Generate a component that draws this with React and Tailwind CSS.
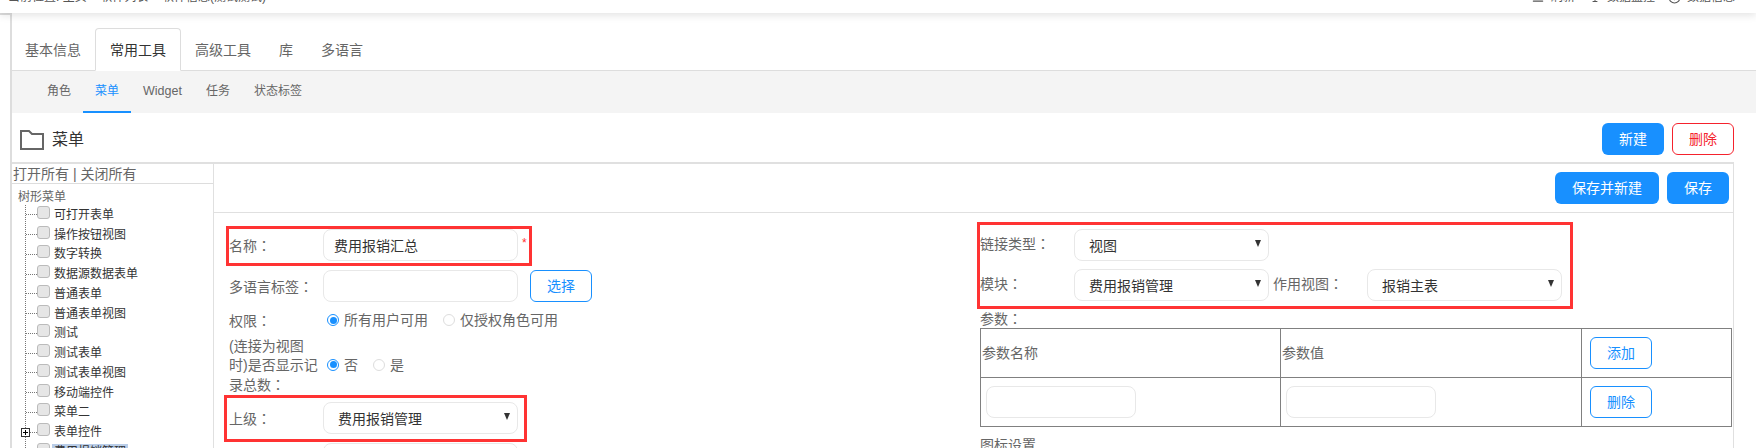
import { Info, Menu, Monitor } from 'lucide-react';

const mainTabs = ['基本信息', '常用工具', '高级工具', '库', '多语言'];
const subTabs = ['角色', '菜单', 'Widget', '任务', '状态标签'];
const treeItems = [
  '可打开表单', '操作按钮视图', '数字转换', '数据源数据表单', '普通表单', '普通表单视图',
  '测试', '测试表单', '测试表单视图', '移动端控件', '菜单二', '表单控件', '费用报销管理',
];

const Input = ({ value = '', className = 'w-[195px]' }) => (
  <input
    readOnly
    value={value}
    className={`h-8 rounded-lg border border-[#e8e8e8] bg-white pl-[10px] text-sm text-[#333] outline-none ${className}`}
  />
);

const Select = ({ value }) => (
  <div className="relative flex h-8 w-[195px] shrink-0 items-center rounded-lg border border-[#e8e8e8] bg-white pl-[14px] pt-px text-sm text-[#333]">
    {value}
    <svg viewBox="0 0 6 7" className="absolute right-[7px] top-[10px] h-[7px] w-[6px]">
      <path d="M0 0h6L3 7z" fill="#333" />
    </svg>
  </div>
);

const OutlineButton = ({ children, className = '' }) => (
  <button className={`h-8 w-[62px] rounded-md border border-[#1890ff] bg-white text-sm text-[#1890ff] ${className}`}>
    {children}
  </button>
);

const SolidButton = ({ children, className = 'w-[62px]' }) => (
  <button className={`h-8 rounded-md bg-[#1890ff] text-sm text-white ${className}`}>{children}</button>
);

const Radio = ({ checked, label, className = '' }) => (
  <span className={`flex items-center text-sm text-[#666] ${className}`}>
    <span className={`mr-[5px] flex h-3 w-3 items-center justify-center rounded-full border ${checked ? 'border-[#1890ff]' : 'border-[#ddd]'}`}>
      {checked && <span className="h-[7px] w-[7px] rounded-full bg-[#1890ff]" />}
    </span>
    {label}
  </span>
);

// fullwidth colon sits centred in the original, TC glyph does that
const Colon = () => <span className="font-['Noto_Sans_CJK_TC',sans-serif]">：</span>;

const Label = ({ children, className = '' }) => (
  <span className={`w-[94px] shrink-0 text-sm text-[#666] ${className}`}>
    {children}
    {children && <Colon />}
  </span>
);

const RedBox = ({ className }) => <div className={`pointer-events-none absolute border-[3px] border-[#ff3333] ${className}`} />;

const TopBar = () => (
  <div className="relative z-10 flex h-[13px] items-start justify-between overflow-hidden bg-white pl-2 pr-[21px] shadow-[0_2px_8px_rgba(0,0,0,0.12)]">
    <div className="-mt-[13px] text-xs leading-5 text-[#555]">当前位置: 主页 &gt; 软件列表 &gt; 软件信息(测试测试)</div>
    <div className="-mt-[13px] flex text-xs leading-5 text-[#555]">
      <span className="flex items-center gap-[6px]"><Menu size={14} />刷新</span>
      <span className="ml-[14px] flex items-center gap-[6px]"><Monitor size={12} />数据监控</span>
      <span className="ml-[13px] flex items-center gap-[6px]"><Info size={13} />数据信息</span>
    </div>
  </div>
);

const Tree = () => (
  <div className="h-full w-[202px] shrink-0 border-r border-[#e0e0e0]">
    <div className="h-[20px] border-b border-[#ddd] pl-px text-sm leading-[20px] text-[#666]">打开所有 | 关闭所有</div>
    <div className="pl-[6px] pt-[5px] text-xs leading-[16px] text-[#666]">树形菜单</div>
    <div className="relative ml-[13px] border-l border-dotted border-[#777]">
      {treeItems.map((item, i) => (
        <div key={item} className="relative flex h-[19.75px] items-center">
          <span className="w-[11px] shrink-0 border-t border-dotted border-[#777]" />
          <span className="-mt-[5px] h-[13px] w-[13px] shrink-0 rounded-[3px] border border-[#bbb] bg-[#e6e6e6]" />
          <span className={`ml-[2px] px-[2px] text-xs text-[#333] ${i === 12 ? 'bg-[#b9cde8]' : ''}`}>{item}</span>
          {i === 11 && (
            <svg viewBox="0 0 9 9" className="absolute -left-[5px] top-[6px] h-[9px] w-[9px]">
              <rect x="0.5" y="0.5" width="8" height="8" fill="#fff" stroke="#333" />
              <path d="M2 4.5h5M4.5 2v5" stroke="#000" />
            </svg>
          )}
        </div>
      ))}
    </div>
  </div>
);

const LeftForm = () => (
  <div className="w-[380px] shrink-0 pl-[15px] pt-4">
    <div className="flex h-8 items-center">
      <Label>名称</Label>
      <Input value="费用报销汇总" />
      <span className="ml-[4px] -mt-1 text-xs text-[#ff3333]">*</span>
    </div>
    <div className="mt-[9px] flex h-8 items-center">
      <Label>多语言标签</Label>
      <Input />
      <OutlineButton className="ml-[12px]">选择</OutlineButton>
    </div>
    <div className="mt-2 flex h-5 items-center">
      <Label>权限</Label>
      <Radio checked label="所有用户可用" className="ml-[4px]" />
      <Radio label="仅授权角色可用" className="ml-[15px]" />
    </div>
    <div className="mt-[7px] flex h-[57px] items-center">
      <span className="w-[94px] shrink-0 whitespace-nowrap text-sm leading-[19px] text-[#666]">
        (连接为视图<br />时)是否显示记<br />录总数<Colon />
      </span>
      <Radio checked label="否" className="-mt-[2px] ml-[4px]" />
      <Radio label="是" className="-mt-[2px] ml-[15px]" />
    </div>
    <div className="mt-2 flex h-8 items-center">
      <Label>上级</Label>
      <Select value="费用报销管理" />
    </div>
    <div className="mt-[9px] flex h-8 items-center">
      <Label />
      <Input />
    </div>
  </div>
);

const RightForm = () => (
  <div className="ml-[386px] w-[752px] shrink-0 pt-4">
    <div className="flex h-8 items-center">
      <Label className="-mt-[3px]">链接类型</Label>
      <Select value="视图" />
    </div>
    <div className="mt-2 flex h-8 items-center">
      <Label className="-mt-[3px]">模块</Label>
      <Select value="费用报销管理" />
      <Label className="-mt-[3px] ml-[4px]">作用视图</Label>
      <Select value="报销主表" />
    </div>
    <div className="mt-2 h-[19px] text-sm leading-[19px] text-[#666]">参数<Colon /></div>
    <table className="w-[752px] table-fixed border-collapse text-sm text-[#666]">
      <tbody>
        <tr className="h-[49px]">
          <td className="w-[300px] border border-[#808080] pl-px">参数名称</td>
          <td className="w-[301px] border border-[#808080] pl-px">参数值</td>
          <td className="border border-[#808080] pl-2"><OutlineButton>添加</OutlineButton></td>
        </tr>
        <tr className="h-[49px]">
          <td className="border border-[#808080] pl-[5px]"><Input className="w-[150px]" /></td>
          <td className="border border-[#808080] pl-[5px]"><Input className="w-[150px]" /></td>
          <td className="border border-[#808080] pl-2"><OutlineButton>删除</OutlineButton></td>
        </tr>
      </tbody>
    </table>
    <div className="mt-2 text-sm leading-5 text-[#666]">图标设置</div>
  </div>
);

const App = () => (
  <div className="relative h-[448px] w-[1756px] overflow-hidden bg-white font-['Liberation_Sans','Noto_Sans_CJK_SC',sans-serif]">
    <TopBar />
    <div className="flex h-[435px]">
      <div className="h-full w-3 shrink-0 border-r-2 border-t-2 border-[#ddd]" />
      <div className="min-w-0 flex-1">
        {/* Tabs */}
        <div className="flex h-[58px] items-end border-b border-[#ddd]">
          {mainTabs.map((tab, i) => (
            <div
              key={tab}
              className={`-mb-px flex h-[43px] items-center rounded-t-[4px] border text-sm ${
                i === 1 ? 'border-[#ddd] border-b-white bg-white px-[14px] text-[#333]' : 'border-transparent px-[13px] text-[#666]'
              } ${i === 0 ? 'pl-[12px]' : ''}`}
            >
              {tab}
            </div>
          ))}
        </div>

        {/* Sub tabs */}
        <div className="flex h-[42px] bg-[#f4f4f4] pl-[23px]">
          {subTabs.map((tab) => (
            <div
              key={tab}
              className={`flex items-center border-b-2 px-3 ${tab === 'Widget' ? 'text-[12.5px]' : 'text-xs'} ${
                tab === '菜单' ? 'border-[#1890ff] text-[#1890ff]' : 'border-transparent text-[#666]'
              }`}
            >
              {tab}
            </div>
          ))}
        </div>

        {/* Title */}
        <div className="flex h-[49px] items-start justify-between pl-2 pr-[22px] pt-[10px]">
          <div className="flex items-center gap-2 pt-[5px] text-base text-[#333]">
            <svg viewBox="0 0 24 20" className="h-5 w-6" fill="none" stroke="#666" strokeWidth="2">
              <path d="M1 1h8l3 3h11v15H1z" />
            </svg>
            菜单
          </div>
          <div className="flex gap-2">
            <SolidButton>新建</SolidButton>
            <button className="h-8 w-[62px] rounded-md border border-[#f5222d] bg-white text-sm text-[#f5222d]">删除</button>
          </div>
        </div>

        {/* Panel */}
        <div className="mr-[22px] flex h-[286px] border-r border-t-2 border-[#e0e0e0]">
          <Tree />
          <div className="min-w-0 flex-1">
            <div className="flex h-[49px] justify-end gap-2 border-b border-[#e0e0e0] pr-[4px] pt-2">
              <SolidButton className="w-[104px]">保存并新建</SolidButton>
              <SolidButton>保存</SolidButton>
            </div>
            <div className="flex">
              <LeftForm />
              <RightForm />
            </div>
          </div>
        </div>
      </div>
    </div>

    {/* Annotation boxes */}
    <RedBox className="left-[226px] top-[226px] h-[40px] w-[306px]" />
    <RedBox className="left-[224px] top-[395px] h-[47px] w-[303px]" />
    <RedBox className="left-[977px] top-[222px] h-[87px] w-[596px]" />
  </div>
);

export default App;
